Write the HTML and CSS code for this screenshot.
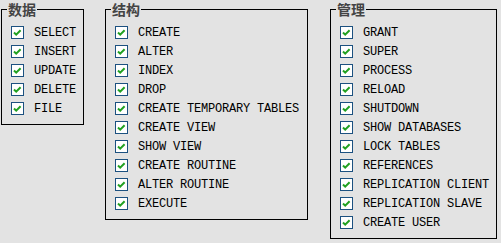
FILE: index.html
```html
<!DOCTYPE html>
<html>
<head>
  <meta charset="utf-8">
  <title>权限</title>
  <link rel="stylesheet" href="styles.css">
</head>
<body>
  <svg width="0" height="0" style="position:absolute">
    <symbol id="chk" viewBox="0 0 13 13">
      <rect x="0.5" y="0.5" width="12" height="12" fill="#fff" stroke="#1c5180"/>
      <path d="M3 6.5 L5.2 8.7 L9.6 4.2" fill="none" stroke="#21a121" stroke-width="2"/>
    </symbol>
  </svg>

  <div class="groups">
    <fieldset class="group group-data">
      <legend>数据</legend>
      <ul class="privs">
        <li><svg class="chk"><use href="#chk"/></svg>SELECT</li>
        <li><svg class="chk"><use href="#chk"/></svg>INSERT</li>
        <li><svg class="chk"><use href="#chk"/></svg>UPDATE</li>
        <li><svg class="chk"><use href="#chk"/></svg>DELETE</li>
        <li><svg class="chk"><use href="#chk"/></svg>FILE</li>
      </ul>
    </fieldset>

    <fieldset class="group group-struct">
      <legend>结构</legend>
      <ul class="privs">
        <li><svg class="chk"><use href="#chk"/></svg>CREATE</li>
        <li><svg class="chk"><use href="#chk"/></svg>ALTER</li>
        <li><svg class="chk"><use href="#chk"/></svg>INDEX</li>
        <li><svg class="chk"><use href="#chk"/></svg>DROP</li>
        <li><svg class="chk"><use href="#chk"/></svg>CREATE TEMPORARY TABLES</li>
        <li><svg class="chk"><use href="#chk"/></svg>CREATE VIEW</li>
        <li><svg class="chk"><use href="#chk"/></svg>SHOW VIEW</li>
        <li><svg class="chk"><use href="#chk"/></svg>CREATE ROUTINE</li>
        <li><svg class="chk"><use href="#chk"/></svg>ALTER ROUTINE</li>
        <li><svg class="chk"><use href="#chk"/></svg>EXECUTE</li>
      </ul>
    </fieldset>

    <fieldset class="group group-admin">
      <legend>管理</legend>
      <ul class="privs">
        <li><svg class="chk"><use href="#chk"/></svg>GRANT</li>
        <li><svg class="chk"><use href="#chk"/></svg>SUPER</li>
        <li><svg class="chk"><use href="#chk"/></svg>PROCESS</li>
        <li><svg class="chk"><use href="#chk"/></svg>RELOAD</li>
        <li><svg class="chk"><use href="#chk"/></svg>SHUTDOWN</li>
        <li><svg class="chk"><use href="#chk"/></svg>SHOW DATABASES</li>
        <li><svg class="chk"><use href="#chk"/></svg>LOCK TABLES</li>
        <li><svg class="chk"><use href="#chk"/></svg>REFERENCES</li>
        <li><svg class="chk"><use href="#chk"/></svg>REPLICATION CLIENT</li>
        <li><svg class="chk"><use href="#chk"/></svg>REPLICATION SLAVE</li>
        <li><svg class="chk"><use href="#chk"/></svg>CREATE USER</li>
      </ul>
    </fieldset>
  </div>
</body>
</html>
```

FILE: styles.css
```css
body {
  margin: 0;
  background: #e3e3e3;
  font-family: "Liberation Mono", monospace;
}
.groups {
  display: flex;
  align-items: flex-start;
  padding-left: 1px;
}
.group {
  margin: 0;
  padding: 0;
  border: 1px solid #000;
  box-sizing: border-box;
  min-width: 0;
}
.group-data { width: 83px; }
.group-struct { width: 203px; margin-left: 21px; }
.group-admin { width: 167px; margin-left: 22px; }
.group legend {
  margin-left: 5px;
  padding: 0 1px;
  font-family: "Noto Sans CJK SC", sans-serif;
  font-weight: bold;
  font-size: 14px;
  line-height: 18px;
  color: #444;
}
.privs {
  list-style: none;
  margin: 0;
  padding: 5px 0 6px 9px;
}
.privs li {
  display: flex;
  align-items: center;
  height: 19px;
  font-size: 12px;
  letter-spacing: -0.2px;
  color: #000;
  white-space: nowrap;
}
.chk {
  width: 13px;
  height: 13px;
  margin-right: 10px;
  flex-shrink: 0;
}
```
